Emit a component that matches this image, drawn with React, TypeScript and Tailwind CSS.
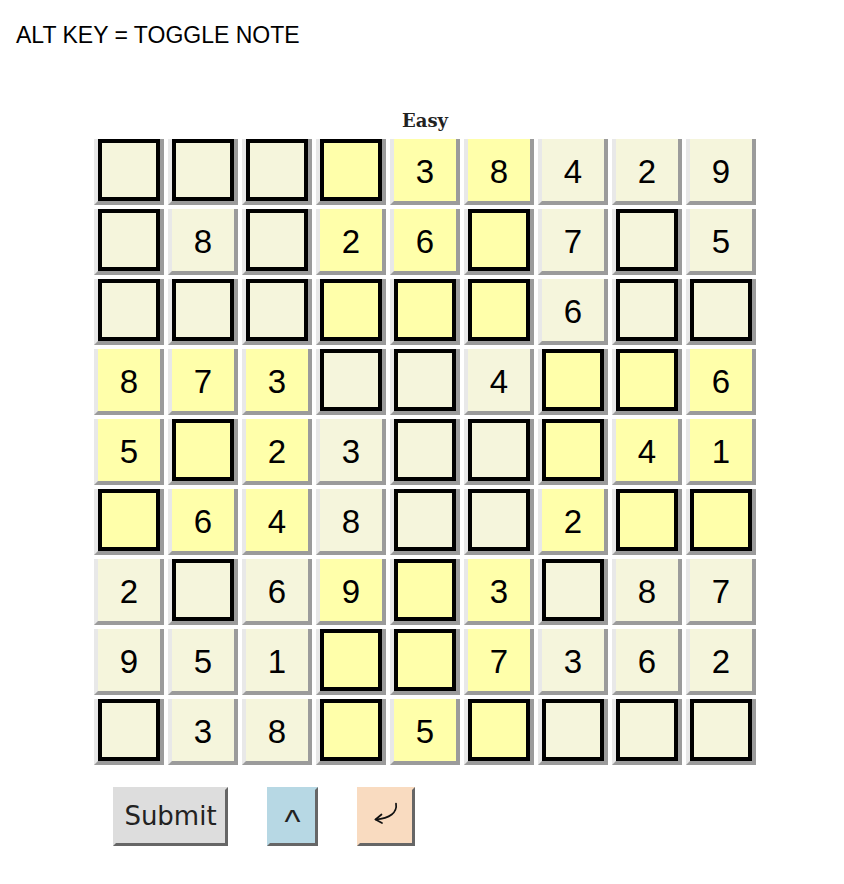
import clsx from 'clsx';

// 0 = empty cell
const puzzle: number[][] = [
  [0, 0, 0, 0, 3, 8, 4, 2, 9],
  [0, 8, 0, 2, 6, 0, 7, 0, 5],
  [0, 0, 0, 0, 0, 0, 6, 0, 0],
  [8, 7, 3, 0, 0, 4, 0, 0, 6],
  [5, 0, 2, 3, 0, 0, 0, 4, 1],
  [0, 6, 4, 8, 0, 0, 2, 0, 0],
  [2, 0, 6, 9, 0, 3, 0, 8, 7],
  [9, 5, 1, 0, 0, 7, 3, 6, 2],
  [0, 3, 8, 0, 5, 0, 0, 0, 0],
];

function Cell({ value, row, col }: { value: number; row: number; col: number }) {
  const yellow = (Math.floor(row / 3) + Math.floor(col / 3)) % 2 === 1;
  return (
    <div
      className={clsx(
        'w-[70px] h-[66px] border-l-4 border-r-4 border-b-4 border-l-[#e8e8e8] border-r-[#9b9b9b] border-b-[#9b9b9b] flex items-center justify-center',
        yellow ? 'bg-[#ffffaa]' : 'bg-[#f5f5dc]'
      )}
    >
      {value ? (
        <span className="text-[33px] leading-none text-black pt-[3px]">{value}</span>
      ) : (
        <div className="w-full h-full border-4 border-black" />
      )}
    </div>
  );
}

function ReturnArrow() {
  return (
    <svg width="28" height="24" viewBox="0 0 28 24" fill="none" stroke="#111" strokeWidth="1.7" strokeLinecap="round" strokeLinejoin="round">
      <path d="M24 1.5 C 25.5 10.5, 18 16.5, 3.5 17.5" />
      <path d="M9.5 12.5 L3.5 17.5 L10 21" />
    </svg>
  );
}

export default function App() {
  return (
    <div className="min-h-screen bg-white font-['Liberation_Sans',Arial,sans-serif] text-black">
      <div className="pt-[21px] pl-4 text-[23px] leading-[28px]">ALT KEY = TOGGLE NOTE</div>

      <div className="ml-[94px] mt-[60px] w-[662px]">
        {/* Difficulty */}
        <div className="text-center font-['DejaVu_Serif',serif] font-bold text-[18px] leading-[24px] mb-[6px] text-[#222]">
          Easy
        </div>

        {/* Board */}
        <div className="grid grid-cols-[repeat(9,70px)] gap-1">
          {puzzle.map((r, ri) =>
            r.map((v, ci) => <Cell key={`${ri}-${ci}`} value={v} row={ri} col={ci} />)
          )}
        </div>

        {/* Controls */}
        <div className="flex items-start gap-[39px] pl-[19px] mt-[22px] font-['DejaVu_Sans',sans-serif] text-[#222]">
          <button className="w-[115px] h-[59px] bg-[#dddddd] border-[3px] border-t-[#dddddd] border-l-[#dddddd] border-r-[#666] border-b-[#666] text-[26px] leading-none pb-[2px]">
            Submit
          </button>
          <button className="w-[51px] h-[59px] bg-[#b7d8e4] border-[3px] border-t-[#b7d8e4] border-l-[#b7d8e4] border-r-[#666] border-b-[#666] font-['Liberation_Sans',Arial,sans-serif] text-[34px] leading-none flex items-center justify-center pt-[8px]">
            ^
          </button>
          <button className="w-[58px] h-[59px] bg-[#f9dbc0] border-[3px] border-t-[#f9dbc0] border-l-[#f9dbc0] border-r-[#666] border-b-[#666] flex items-center justify-center pb-[6px]">
            <ReturnArrow />
          </button>
        </div>
      </div>
    </div>
  );
}
